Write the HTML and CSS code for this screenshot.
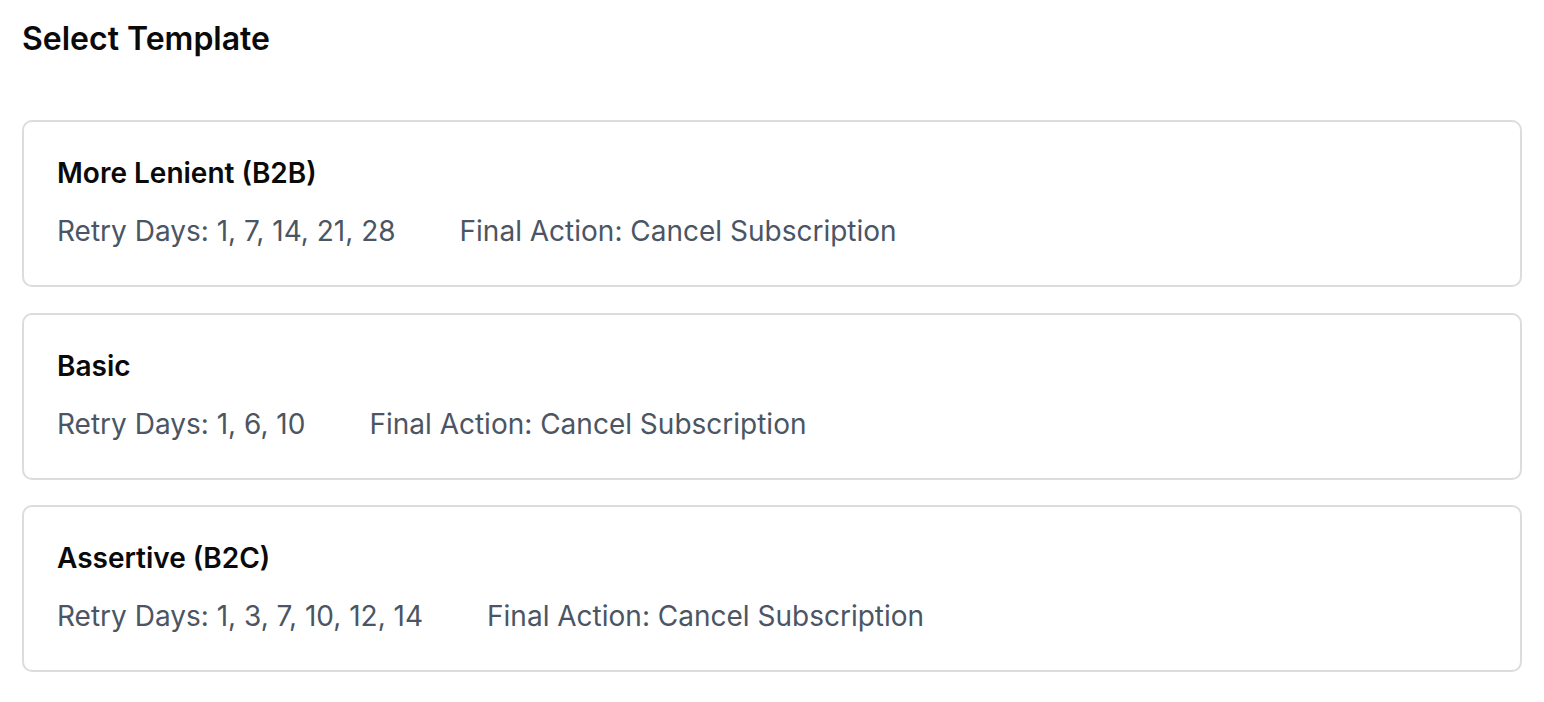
FILE: index.html
```html
<!DOCTYPE html>
<html>
<head>
<meta charset="utf-8">
<link rel="stylesheet" href="styles.css">
</head>
<body>
<div class="page">
  <h1 class="heading">Select Template</h1>
  <div class="list">
    <div class="card">
      <div class="card-title">More Lenient (B2B)</div>
      <div class="card-meta">
        <span>Retry Days: 1, 7, 14, 21, 28</span>
        <span>Final Action: Cancel Subscription</span>
      </div>
    </div>
    <div class="card">
      <div class="card-title">Basic</div>
      <div class="card-meta">
        <span>Retry Days: 1, 6, 10</span>
        <span>Final Action: Cancel Subscription</span>
      </div>
    </div>
    <div class="card">
      <div class="card-title">Assertive (B2C)</div>
      <div class="card-meta">
        <span>Retry Days: 1, 3, 7, 10, 12, 14</span>
        <span>Final Action: Cancel Subscription</span>
      </div>
    </div>
  </div>
</div>
</body>
</html>
```
FILE: styles.css
```css
html, body {
  margin: 0;
  padding: 0;
  background: #ffffff;
}
body {
  font-family: Inter, "Noto Sans", sans-serif;
  color: #000000;
}
.page {
  padding: 19px 22px 0 22px;
}
.heading {
  margin: 0;
  font-size: 32px;
  line-height: 40px;
  font-weight: 600;
  color: #0a0a0a;
}
.list {
  margin-top: 61px;
  display: flex;
  flex-direction: column;
  gap: 25.5px;
}
.card {
  border: 2px solid #dcdcdc;
  border-radius: 10px;
  padding: 32px 33px 35px 33px;
}
.card-title {
  font-size: 28px;
  line-height: 38px;
  font-weight: 600;
  color: #0a0a0a;
}
.card-meta {
  margin-top: 20px;
  display: flex;
  gap: 64px;
  font-size: 28px;
  line-height: 38px;
  color: #4b5563;
}
```
